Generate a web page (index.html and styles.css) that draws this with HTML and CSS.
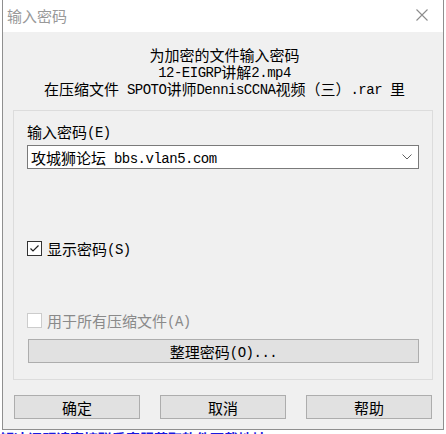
FILE: index.html
```html
<!DOCTYPE html>
<html lang="zh-CN">
<head>
<meta charset="utf-8">
<title>输入密码</title>
<link rel="stylesheet" href="styles.css">
</head>
<body>
<div class="dialog">
  <div class="titlebar">
    <span class="title">输入密码</span>
    <svg class="close" width="12" height="12" viewBox="0 0 12 12"><path d="M0.5 0.5 L11.5 11.5 M11.5 0.5 L0.5 11.5" stroke="#8c8c8c" stroke-width="1.1" fill="none"/></svg>
  </div>
  <div class="body">
    <div class="info">
      <div class="row">为加密的文件输入密码</div>
      <div class="row"><span class="l">12-EIGRP</span>讲解<span class="l">2.mp4</span></div>
      <div class="row">在压缩文件<span class="l"> SPOTO</span>讲师<span class="l">DennisCCNA</span>视频（三）<span class="l">.rar </span>里</div>
    </div>
    <div class="group">
      <div class="label row">输入密码<span class="l">(E)</span></div>
      <div class="combo">
        <span class="combo-text row">攻城狮论坛<span class="l"> bbs.vlan5.com</span></span>
        <svg class="chev" width="10" height="6" viewBox="0 0 10 6"><path d="M0.5 0.5 L5 5 L9.5 0.5" stroke="#606060" stroke-width="1" fill="none"/></svg>
      </div>
      <div class="check show">
        <span class="box"><svg width="13" height="13" viewBox="0 0 13 13"><path d="M2.5 6.5 L5 9 L10.5 3.5" stroke="#202020" stroke-width="1.2" fill="none"/></svg></span>
        <span class="row">显示密码<span class="l">(S)</span></span>
      </div>
      <div class="check all disabled">
        <span class="box"></span>
        <span class="row">用于所有压缩文件<span class="l">(A)</span></span>
      </div>
      <div class="btn wide"><span class="row">整理密码<span class="l">(O)...</span></span></div>
    </div>
    <div class="buttons">
      <div class="btn">确定</div>
      <div class="btn">取消</div>
      <div class="btn">帮助</div>
    </div>
  </div>
</div>
<div class="bgtext">解决问题请直接联系客服获取软件下载地址</div>
</body>
</html>
```
FILE: styles.css
```css
html, body {
  margin: 0;
  padding: 0;
  background: #ffffff;
  overflow: hidden;
  width: 446px;
  height: 434px;
}

body {
  font-family: "Noto Sans CJK SC", sans-serif;
}

.dialog {
  margin-left: 2px;
  width: 440px;
  height: 429px;
  border: 1px solid #8f8f8f;
  border-top: none;
  background: #f0f0f0;
  display: flex;
  flex-direction: column;
}

.row {
  height: 17px;
  line-height: 17px;
  white-space: nowrap;
}

.l {
  font-family: "Liberation Mono", monospace;
  font-size: 14px;
  letter-spacing: -0.5px;
  line-height: 12px;
  position: relative;
  top: -1px;
}

.titlebar {
  height: 32px;
  background: #ffffff;
  display: flex;
  align-items: center;
  justify-content: space-between;
  padding: 0 15px 0 4px;
}

.title {
  font-size: 15px;
  color: #999999;
  line-height: 17px;
  margin-top: -1px;
}

.close {
  margin-top: -2px;
}

.body {
  padding: 14px 10px 0 10px;
  display: flex;
  flex-direction: column;
  font-size: 15px;
  color: #000;
}

.info {
  text-align: center;
  margin-left: 3px;
}

.group {
  margin-top: 13px;
  border: 1px solid #dcdcdc;
  padding: 12px 13px 16px 13px;
  display: flex;
  flex-direction: column;
}

.combo {
  margin-top: 5px;
  height: 22px;
  border: 1px solid #7a7a7a;
  background: #ffffff;
  display: flex;
  align-items: center;
  justify-content: space-between;
  padding: 0 6px 0 3px;
}

.check {
  display: flex;
  align-items: center;
  gap: 5px;
  height: 17px;
}

.check.show {
  margin-top: 71px;
}

.check.all {
  margin-top: 55px;
}

.box {
  width: 13px;
  height: 13px;
  border: 1px solid #333333;
  background: #ffffff;
  display: flex;
}

.check.disabled {
  color: #8a8a8a;
}

.check.disabled .box {
  border-color: #cccccc;
}

.btn {
  height: 22px;
  border: 1px solid #adadad;
  background: #e1e1e1;
  display: flex;
  align-items: center;
  justify-content: center;
  line-height: 17px;
}

.btn.wide {
  margin-top: 10px;
  margin-left: 1px;
}

.buttons {
  margin-top: 15px;
  margin-left: 1px;
  display: grid;
  grid-template-columns: 126px 126px 126px;
  column-gap: 20px;
}

.bgtext {
  font-size: 14px;
  line-height: 14px;
  font-weight: bold;
  color: #1a1adf;
  white-space: nowrap;
  margin-top: 1px;
  height: 5px;
  overflow: hidden;
}
```
